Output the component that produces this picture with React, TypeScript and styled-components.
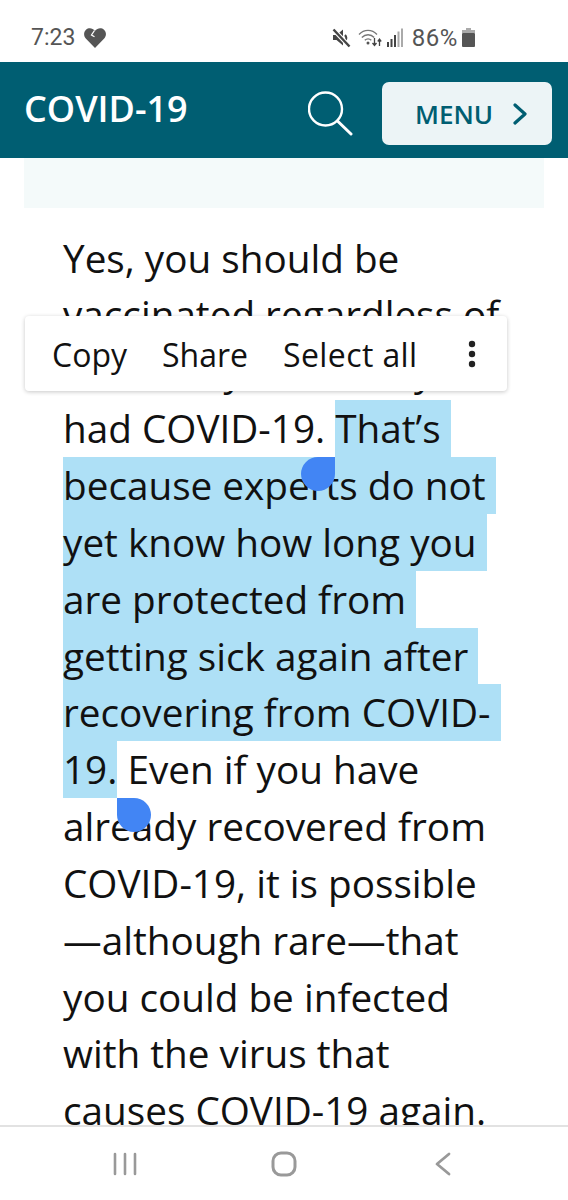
import styled, { createGlobalStyle } from 'styled-components';

const GlobalStyle = createGlobalStyle`
  html, body {
    margin: 0;
    padding: 0;
    background: #fff;
  }
`;

const Screen = styled.div`
  position: relative;
  width: 568px;
  height: 1200px;
  display: flex;
  flex-direction: column;
  overflow: hidden;
  font-family: "Open Sans", "Liberation Sans", sans-serif;
  background: #fff;
`;

const StatusBar = styled.div`
  height: 62px;
  flex: none;
  display: flex;
  align-items: center;
  justify-content: space-between;
  padding: 13px 93px 0 31px;
  box-sizing: border-box;
  font-family: Roboto, "Noto Sans", sans-serif;
  font-size: 23px;
  color: #555;
`;

const StatusGroup = styled.div`
  display: flex;
  align-items: center;
  gap: 9px;
`;

const StatusIcons = styled(StatusGroup)`
  gap: 5px;
`;

const MuteIcon = styled.svg`
  margin-right: 2px;
`;

const Percent = styled.span`
  margin-left: 4px;
  margin-right: -1px;
  font-size: 24px;
  letter-spacing: 0.6px;
`;

const Header = styled.header`
  height: 96px;
  flex: none;
  display: flex;
  align-items: center;
  background: #005e72;
  padding: 0 16px 0 24px;
  box-sizing: border-box;
`;

const Title = styled.div`
  flex: 1;
  color: #fff;
  font-size: 36px;
  font-weight: 600;
  margin-top: -4px;
`;

const SearchIcon = styled.svg`
  margin-right: 29px;
  margin-top: 7px;
`;

const MenuButton = styled.div`
  width: 170px;
  height: 63px;
  margin-top: 7px;
  display: flex;
  align-items: center;
  gap: 20px;
  padding-left: 33px;
  box-sizing: border-box;
  background: #ecf4f6;
  border-radius: 7px;
  color: #005e72;
  font-size: 26px;
  font-weight: 600;
`;

const Content = styled.main`
  flex: 1;
  min-height: 0;
  overflow: hidden;
  padding: 0 24px;
`;

const Banner = styled.div`
  height: 50px;
  background: #f4fafa;
`;

const Article = styled.div`
  padding: 21.6px 0 0 39px;
  font-size: 38.7px;
  color: #111;
`;

const Line = styled.div`
  height: 56.85px;
  line-height: 56.85px;
  white-space: nowrap;
`;

const Mark = styled.span<{ $pad: number }>`
  position: relative;
  display: inline-block;
  background: #aee0f6;
  padding-right: ${p => p.$pad}px;
`;

const StartHandle = styled.span`
  position: absolute;
  z-index: 1;
  left: -34px;
  top: 100%;
  width: 34px;
  height: 34px;
  background: #4285f4;
  border-radius: 50% 0 50% 50%;
`;

const EndHandle = styled.span`
  position: absolute;
  z-index: 1;
  right: -34px;
  top: 100%;
  width: 34px;
  height: 34px;
  background: #4285f4;
  border-radius: 0 50% 50% 50%;
`;

const Toolbar = styled.div`
  position: absolute;
  z-index: 2;
  left: 25px;
  top: 316px;
  width: 482px;
  height: 75px;
  box-sizing: border-box;
  display: flex;
  align-items: center;
  padding: 1px 27px 0;
  background: #fff;
  border-radius: 4px;
  box-shadow: 0 1px 4px rgba(0, 0, 0, 0.22);
  font-size: 32px;
  color: #111;
`;

const ToolbarItem = styled.span`
  margin-right: 35px;
`;

const SelectAll = styled.span`
  letter-spacing: 0.4px;
`;

const MoreDots = styled.svg`
  margin-left: 50px;
`;

const NavBar = styled.nav`
  position: relative;
  z-index: 2;
  height: 75px;
  flex: none;
  display: grid;
  grid-template-columns: repeat(3, 159px);
  justify-content: center;
  justify-items: center;
  align-items: center;
  background: #fff;
  border-top: 2px solid #e2e2e2;
  box-sizing: border-box;
`;

const lines = [
  'already recovered from',
  'COVID-19, it is possible',
  '—although rare—that',
  'you could be infected',
  'with the virus that',
  'causes COVID-19 again.',
];

export default function App() {
  return (
    <>
      <GlobalStyle />
      <Screen>
        <StatusBar>
          <StatusGroup>
            <span>7:23</span>
            <svg width="22" height="20" viewBox="0 0 22 20">
              <path
                d="M11 20 1.800 10.600C-.5 8-.5 3.800 2 1.700 4.600-.5 8.400-.3 11 2.800 13.600-.3 17.400-.5 20 1.700c2.500 2.100 2.600 6.300.2 8.900Z"
                fill="#555"
              />
              <path d="M10.500 2.500 7.500 7l3 1.800" fill="none" stroke="#fff" strokeWidth="1.300" />
            </svg>
          </StatusGroup>
          <StatusIcons>
            <MuteIcon width="19" height="20" viewBox="0 0 19 20">
              <path d="M1 7h3.500L11 1.500v16L4.500 12H1Z" fill="#444" />
              <path d="M13 7c1.400 1.500 1.400 4 .6 5.500" stroke="#444" strokeWidth="2" fill="none" />
              <path d="M1.500 1.500 17.500 18.500" stroke="#fff" strokeWidth="4.500" />
              <path d="M1.500 1.500 17.500 18.500" stroke="#444" strokeWidth="2.400" />
            </MuteIcon>
            <svg width="24" height="19" viewBox="0 0 24 19">
              <g fill="none" stroke="#777" strokeWidth="1.300">
                <path d="M1 6.500C6 1 14 1 19 6.500" />
                <path d="M3.800 9.500c3.500-3.700 9-3.700 12.400 0" />
                <path d="M6.800 12.300c2-2 4.600-2 6.500 0" />
              </g>
              <circle cx="10" cy="15" r="1.500" fill="#555" />
              <path d="M16.500 10v7M14.500 15l2 2.500 2-2.500M21.500 18v-6.500M19.800 13.500l1.700-2.300 1.700 2.300" stroke="#444" strokeWidth="1.300" fill="none" />
            </svg>
            <svg width="16" height="19" viewBox="0 0 16 19">
              <rect x="0" y="14" width="2" height="5" fill="#444" />
              <rect x="3.500" y="11" width="2" height="8" fill="#444" />
              <rect x="7" y="7" width="2" height="12" fill="#444" />
              <rect x="10.500" y="3.500" width="2" height="15.500" fill="#aaa" />
              <rect x="14" y="0.500" width="2" height="18.500" fill="#aaa" />
            </svg>
            <Percent>86%</Percent>
            <svg width="13" height="19" viewBox="0 0 13 19">
              <path d="M4 0h5v2H4Z" fill="#aaa" />
              <rect x="0" y="2" width="13" height="3" fill="#aaa" />
              <rect x="0" y="5" width="13" height="14" rx="1" fill="#555" />
            </svg>
          </StatusIcons>
        </StatusBar>

        <Header>
          <Title>COVID-19</Title>
          <SearchIcon width="45" height="45" viewBox="0 0 45 45">
            <circle cx="17.500" cy="18" r="16.500" fill="none" stroke="#fff" strokeWidth="2.400" />
            <path d="M29.500 30 43 43" stroke="#fff" strokeWidth="3" strokeLinecap="round" />
          </SearchIcon>
          <MenuButton>
            MENU
            <svg width="14" height="22" viewBox="0 0 14 22">
              <path d="M2 2l10 9-10 9" fill="none" stroke="#005e72" strokeWidth="3.200" strokeLinecap="round" strokeLinejoin="round" />
            </svg>
          </MenuButton>
        </Header>

        <Content>
          <Banner />
          <Article>
            <Line>Yes, you should be</Line>
            <Line>vaccinated regardless of</Line>
            <Line>whether you already</Line>
            <Line>
              had COVID-19. <Mark $pad={10}>That’s<StartHandle /></Mark>
            </Line>
            <Line><Mark $pad={10}>because experts do not</Mark></Line>
            <Line><Mark $pad={10}>yet know how long you</Mark></Line>
            <Line><Mark $pad={10}>are protected from</Mark></Line>
            <Line><Mark $pad={10}>getting sick again after</Mark></Line>
            <Line><Mark $pad={10}>recovering from COVID-</Mark></Line>
            <Line>
              <Mark $pad={0}>19.<EndHandle /></Mark> Even if you have
            </Line>
            {lines.map(line => (
              <Line key={line}>{line}</Line>
            ))}
          </Article>
        </Content>

        <Toolbar>
          <ToolbarItem>Copy</ToolbarItem>
          <ToolbarItem>Share</ToolbarItem>
          <SelectAll>Select all</SelectAll>
          <MoreDots width="8" height="28" viewBox="0 0 8 28">
            <circle cx="4" cy="4" r="3.200" fill="#222" />
            <circle cx="4" cy="14" r="3.200" fill="#222" />
            <circle cx="4" cy="24" r="3.200" fill="#222" />
          </MoreDots>
        </Toolbar>

        <NavBar>
          <svg width="24" height="24" viewBox="0 0 24 24">
            <path d="M2 2v20M12 2v20M22 2v20" stroke="#999" strokeWidth="2.600" strokeLinecap="round" />
          </svg>
          <svg width="26" height="26" viewBox="0 0 26 26">
            <rect x="2" y="2" width="22" height="22" rx="8" fill="none" stroke="#999" strokeWidth="3" />
          </svg>
          <svg width="16" height="24" viewBox="0 0 16 24">
            <path d="M14 2 2 12l12 10" fill="none" stroke="#999" strokeWidth="2.800" strokeLinecap="round" strokeLinejoin="round" />
          </svg>
        </NavBar>
      </Screen>
    </>
  );
}
